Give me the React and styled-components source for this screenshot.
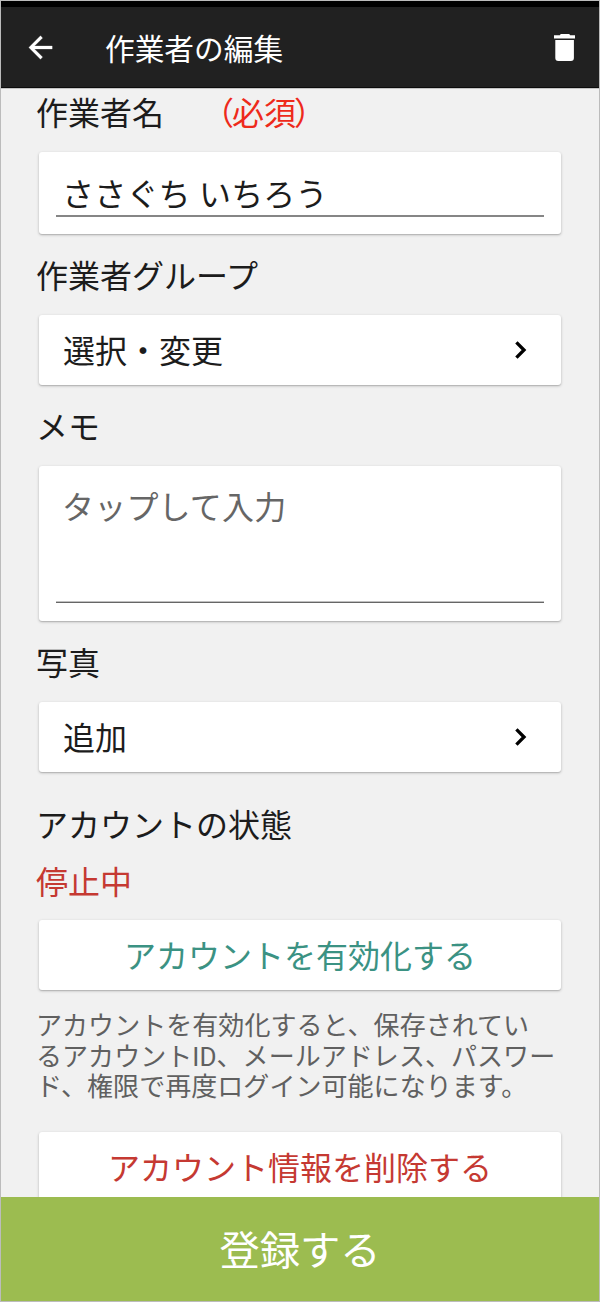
import React from "react";
import styled, { createGlobalStyle } from "styled-components";

const GlobalStyle = createGlobalStyle`
  *, *::before, *::after { box-sizing: border-box; }
  body {
    margin: 0;
    font-family: Roboto, "Noto Sans CJK JP", sans-serif;
    color: #1c1c1c;
  }
`;

const Screen = styled.div`
  width: 600px;
  height: 1302px;
  display: flex;
  flex-direction: column;
  overflow: hidden;
  background: #f1f1f1;
  border: 1px solid #bcbcbc;
`;

const StatusBar = styled.div`
  flex: none;
  height: 6px;
  background: #000;
`;

const AppBar = styled.header`
  flex: none;
  height: 81px;
  display: flex;
  align-items: center;
  padding: 0 17px 0 22px;
  background: #212121;
  border-bottom: 1px solid #0c0c0c;
  color: #fff;
`;

const IconButton = styled.button`
  display: flex;
  padding: 0;
  border: 0;
  background: none;
  color: inherit;
`;

const Title = styled.h1`
  flex: 1;
  margin: 0 0 0 47px;
  padding-top: 5px;
  font-size: 29.7px;
  line-height: 40px;
  font-weight: 400;
`;

const Form = styled.main`
  flex: 1;
  min-height: 0;
  overflow: hidden;
  display: flex;
  flex-direction: column;
  padding: 0 38px;
  border-top: 1px solid #c4c4c4;
`;

const Label = styled.h2`
  flex: none;
  display: flex;
  gap: 38px;
  margin: ${(p) => p.$top}px 0 ${(p) => p.$bottom}px -3px;
  font-size: 32px;
  line-height: 40px;
  font-weight: 400;
  color: ${(p) => p.$color || "#1c1c1c"};
`;

const Required = styled.span`
  display: flex;
  color: #ee2a1b;
`;

const RequiredText = styled.span`
  margin: 0 -2px;
`;

const Card = styled.div`
  flex: none;
  height: ${(p) => p.$height}px;
  padding: ${(p) => p.$pad || "0 24px"};
  display: flex;
  align-items: ${(p) => p.$align || "center"};
  justify-content: ${(p) => p.$justify || "space-between"};
  background: #fff;
  border-radius: 3px;
  box-shadow: 0 1px 3px rgba(0, 0, 0, 0.24), 0 1px 1px rgba(0, 0, 0, 0.1);
  font-size: 32px;
  line-height: 40px;
  color: ${(p) => p.$color || "#1c1c1c"};
`;

const CardText = styled.span`
  padding-top: ${(p) => p.$drop || 0}px;
`;

const Field = styled.div`
  flex: 1;
  padding: ${(p) => p.$top}px 6px 0;
  border-bottom: ${(p) => p.$line};
  box-shadow: ${(p) => p.$soften || "none"};
  letter-spacing: 0.2px;
  color: ${(p) => p.$color || "inherit"};
`;

const Help = styled.p`
  flex: none;
  margin: 21px -6px 29px -3px;
  font-size: 26px;
  line-height: 30.5px;
  letter-spacing: 0.05px;
  color: #606060;
`;

const Submit = styled.button`
  flex: none;
  height: 104px;
  padding: 5px 0 0;
  border: 0;
  background: #9cbc50;
  color: #fff;
  font-family: inherit;
  font-size: 40.3px;
  line-height: 50px;
`;

const BackIcon = () => (
  <svg width="35" height="35" viewBox="0 0 24 24" fill="currentColor" stroke="currentColor" strokeWidth="0.2">
    <path d="M20 11H7.83l5.59-5.59L12 4l-8 8 8 8 1.41-1.41L7.83 13H20z" />
  </svg>
);

const TrashIcon = () => (
  <svg width="35" height="35" viewBox="0 0 35 35" fill="currentColor">
    <path d="M7 5.3h5.8l1-1.3h8.4l1 1.3H28v3.3H7zM8.3 10h18.6v18a3 3 0 0 1-3 3H11.3a3 3 0 0 1-3-3z" />
  </svg>
);

const Chevron = () => (
  <svg width="30" height="30" viewBox="0 0 30 30" fill="none" stroke="#000" strokeWidth="3.3">
    <path d="M9.4 7.4 17 15l-7.6 7.6" />
  </svg>
);

export default function App() {
  return (
    <>
      <GlobalStyle />
      <Screen lang="ja">
        <StatusBar />
        <AppBar>
          <IconButton aria-label="戻る">
            <BackIcon />
          </IconButton>
          <Title>作業者の編集</Title>
          <IconButton aria-label="削除">
            <TrashIcon />
          </IconButton>
        </AppBar>
        <Form>
          <Label $top={5} $bottom={18}>
            作業者名
            <Required>
              （<RequiredText>必須</RequiredText>）
            </Required>
          </Label>
          <Card $height={82} $pad="0 17px 17px" $align="stretch">
            <Field $top={23} $line="2px solid #868686">ささぐち いちろう</Field>
          </Card>
          <Label $top={23} $bottom={18}>作業者グループ</Label>
          <Card $height={70}>
            <CardText $drop={4}>選択・変更</CardText>
            <Chevron />
          </Card>
          <Label $top={23} $bottom={18}>メモ</Label>
          <Card $height={155} $pad="0 17px 18px" $align="stretch">
            <Field $top={22} $line="1px solid #666" $soften="inset 0 -1px #c0c0c0" $color="#666">
              タップして入力
            </Field>
          </Card>
          <Label $top={23} $bottom={18}>写真</Label>
          <Card $height={70}>
            <CardText $drop={4}>追加</CardText>
            <Chevron />
          </Card>
          <Label $top={34} $bottom={0}>アカウントの状態</Label>
          <Label $top={17} $bottom={17} $color="#c53932">停止中</Label>
          <Card $height={70} $justify="center" $color="#3b9283">
            <CardText $drop={4}>アカウントを有効化する</CardText>
          </Card>
          <Help>
            アカウントを有効化すると、保存されてい
            <br />
            るアカウントID、メールアドレス、パスワー
            <br />
            ド、権限で再度ログイン可能になります。
          </Help>
          <Card $height={70} $justify="center" $color="#c53932">
            <CardText $drop={4}>アカウント情報を削除する</CardText>
          </Card>
        </Form>
        <Submit>登録する</Submit>
      </Screen>
    </>
  );
}
